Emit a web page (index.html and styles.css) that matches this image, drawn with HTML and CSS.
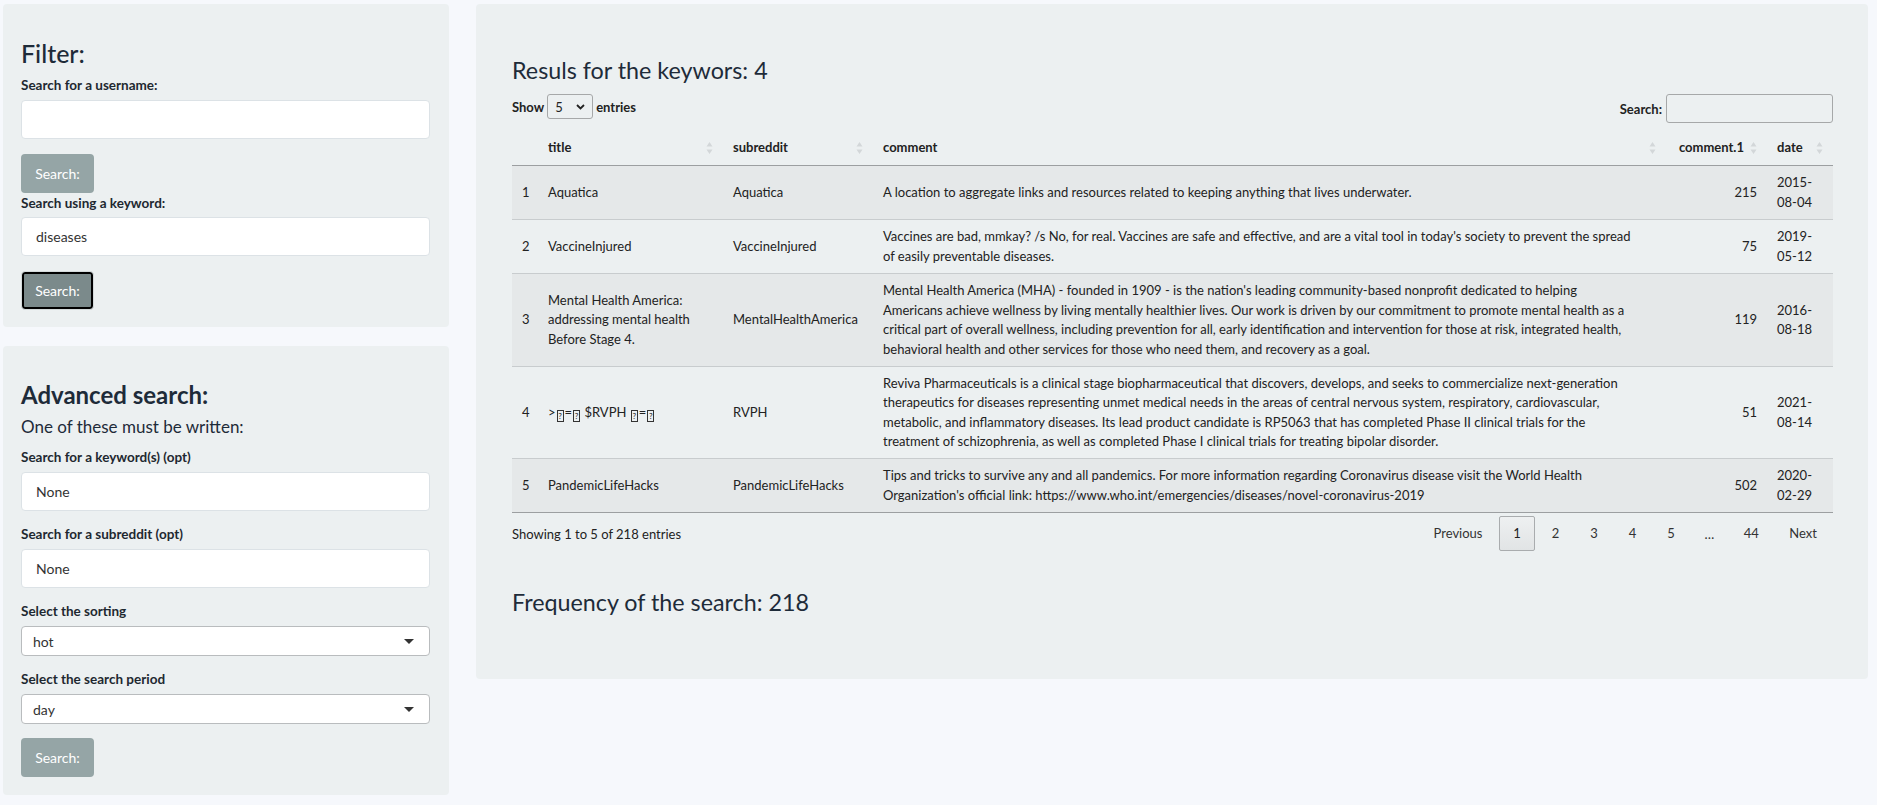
FILE: index.html
```html
<!DOCTYPE html>
<html>
<head>
<meta charset="utf-8">
<title>Search</title>
<link rel="stylesheet" href="styles.css">
</head>
<body>
<div class="page">
  <aside class="sidebar">
    <section class="well well-filter">
      <h3 class="h-filter">Filter:</h3>
      <label class="lbl">Search for a username:</label>
      <div class="input"></div>
      <button class="btn">Search:</button>
      <label class="lbl lbl-tight">Search using a keyword:</label>
      <div class="input">diseases</div>
      <button class="btn btn-focus">Search:</button>
    </section>
    <section class="well well-adv">
      <h3 class="h-adv">Advanced search:</h3>
      <p class="lead">One of these must be written:</p>
      <div class="group">
        <label class="lbl">Search for a keyword(s) (opt)</label>
        <div class="input">None</div>
      </div>
      <div class="group">
        <label class="lbl">Search for a subreddit (opt)</label>
        <div class="input">None</div>
      </div>
      <div class="group">
        <label class="lbl">Select the sorting</label>
        <div class="select"><span>hot</span><span class="caret"></span></div>
      </div>
      <div class="group group-last">
        <label class="lbl">Select the search period</label>
        <div class="select"><span>day</span><span class="caret"></span></div>
      </div>
      <button class="btn">Search:</button>
    </section>
  </aside>

  <main class="well main">
    <h4 class="title">Resuls for the keywors: 4</h4>
    <div class="controls">
      <div class="length">
        <span class="ctl-label">Show</span>
        <span class="len-select"><span>5</span>
          <svg class="chev" width="9" height="6" viewBox="0 0 9 6"><path d="M1 1 L4.5 4.5 L8 1" fill="none" stroke="#222" stroke-width="1.8"/></svg>
        </span>
        <span class="ctl-label">entries</span>
      </div>
      <div class="filter">
        <span class="ctl-label">Search:</span>
        <span class="search-box"></span>
      </div>
    </div>

    <table class="dt">
      <colgroup>
        <col class="c-num"><col class="c-title"><col class="c-sub"><col class="c-com"><col class="c-com1"><col class="c-date">
      </colgroup>
      <thead>
        <tr>
          <th></th>
          <th><div class="th-in"><span>title</span><svg class="sort" width="7" height="14" viewBox="0 0 7 14"><path d="M3.5 1 L6.5 5.5 H0.5 Z M3.5 13 L6.5 8.5 H0.5 Z" fill="#d3d7d9"/></svg></div></th>
          <th><div class="th-in"><span>subreddit</span><svg class="sort" width="7" height="14" viewBox="0 0 7 14"><path d="M3.5 1 L6.5 5.5 H0.5 Z M3.5 13 L6.5 8.5 H0.5 Z" fill="#d3d7d9"/></svg></div></th>
          <th><div class="th-in"><span>comment</span><svg class="sort" width="7" height="14" viewBox="0 0 7 14"><path d="M3.5 1 L6.5 5.5 H0.5 Z M3.5 13 L6.5 8.5 H0.5 Z" fill="#d3d7d9"/></svg></div></th>
          <th><div class="th-in th-right"><span>comment.1</span><svg class="sort" width="7" height="14" viewBox="0 0 7 14"><path d="M3.5 1 L6.5 5.5 H0.5 Z M3.5 13 L6.5 8.5 H0.5 Z" fill="#d3d7d9"/></svg></div></th>
          <th><div class="th-in"><span>date</span><svg class="sort" width="7" height="14" viewBox="0 0 7 14"><path d="M3.5 1 L6.5 5.5 H0.5 Z M3.5 13 L6.5 8.5 H0.5 Z" fill="#d3d7d9"/></svg></div></th>
        </tr>
      </thead>
      <tbody>
        <tr class="odd">
          <td>1</td><td>Aquatica</td><td>Aquatica</td>
          <td>A location to aggregate links and resources related to keeping anything that lives underwater.</td>
          <td class="num">215</td><td>2015-08-04</td>
        </tr>
        <tr>
          <td>2</td><td>VaccineInjured</td><td>VaccineInjured</td>
          <td>Vaccines are bad, mmkay? /s No, for real. Vaccines are safe and effective, and are a vital tool in today's society to prevent the spread<br>of easily preventable diseases.</td>
          <td class="num">75</td><td>2019-05-12</td>
        </tr>
        <tr class="odd">
          <td>3</td><td>Mental Health America: addressing mental health Before Stage 4.</td><td>MentalHealthAmerica</td>
          <td>Mental Health America (MHA) - founded in 1909 - is the nation's leading community-based nonprofit dedicated to helping<br>Americans achieve wellness by living mentally healthier lives. Our work is driven by our commitment to promote mental health as a<br>critical part of overall wellness, including prevention for all, early identification and intervention for those at risk, integrated health,<br>behavioral health and other services for those who need them, and recovery as a goal.</td>
          <td class="num">119</td><td>2016-08-18</td>
        </tr>
        <tr class="r4">
          <td>4</td><td>&gt;<span class="tofu">?</span>=<span class="tofu">?</span> $RVPH <span class="tofu">?</span>=<span class="tofu">?</span></td><td>RVPH</td>
          <td>Reviva Pharmaceuticals is a clinical stage biopharmaceutical that discovers, develops, and seeks to commercialize next-generation<br>therapeutics for diseases representing unmet medical needs in the areas of central nervous system, respiratory, cardiovascular,<br>metabolic, and inflammatory diseases. Its lead product candidate is RP5063 that has completed Phase II clinical trials for the<br>treatment of schizophrenia, as well as completed Phase I clinical trials for treating bipolar disorder.</td>
          <td class="num">51</td><td>2021-08-14</td>
        </tr>
        <tr class="odd last">
          <td>5</td><td>PandemicLifeHacks</td><td>PandemicLifeHacks</td>
          <td>Tips and tricks to survive any and all pandemics. For more information regarding Coronavirus disease visit the World Health<br>Organization's official link: https://www.who.int/emergencies/diseases/novel-coronavirus-2019</td>
          <td class="num">502</td><td>2020-02-29</td>
        </tr>
      </tbody>
    </table>

    <div class="footer">
      <div class="info">Showing 1 to 5 of 218 entries</div>
      <div class="pager">
        <span class="pg">Previous</span>
        <span class="pg current">1</span>
        <span class="pg">2</span>
        <span class="pg">3</span>
        <span class="pg">4</span>
        <span class="pg">5</span>
        <span class="ellipsis">…</span>
        <span class="pg">44</span>
        <span class="pg">Next</span>
      </div>
    </div>

    <h4 class="title freq">Frequency of the search: 218</h4>
  </main>
</div>
</body>
</html>
```

FILE: styles.css
```css
* { box-sizing: border-box; }

body {
  margin: 0;
  background: #f6f8fc;
  font-family: "Lato", "Liberation Sans", sans-serif;
  color: #222;
}

.page {
  display: flex;
  align-items: flex-start;
  gap: 27px;
  padding: 4px 9px 0 3px;
}

.sidebar {
  width: 446px;
  flex: none;
  display: flex;
  flex-direction: column;
  gap: 19px;
}

.well {
  background: #ecf0f1;
  border-radius: 4px;
}

.well-filter { padding: 34px 19px 17px 18px; }
.well-adv { padding: 34px 19px 18px 18px; }

.h-filter, .h-adv {
  margin: 0 0 7px;
  font-size: 25px;
  line-height: 30px;
  color: #1e2b39;
}
.h-filter { font-weight: 500; }
.h-adv { font-weight: 700; font-size: 24px; margin-bottom: 5px; }

.lead {
  margin: 0 0 9px;
  font-size: 17px;
  line-height: 23px;
  color: #1e2b39;
}

.lbl {
  display: block;
  font-size: 13.5px;
  line-height: 20px;
  font-weight: 700;
  margin: 0 0 5px;
  color: #1e2830;
}
.lbl-tight { margin-bottom: 4px; }

.input {
  height: 39px;
  background: #fff;
  border: 1px solid #dce2e6;
  border-radius: 4px;
  padding: 0 14px;
  font-size: 14px;
  line-height: 37px;
  color: #333;
}
.well-filter .input { margin-bottom: 15px; }

.group { margin-bottom: 13px; }
.group-last { margin-bottom: 14px; }

.select {
  height: 30px;
  background: #fff;
  border: 1px solid #b9bcbe;
  border-radius: 4px;
  padding: 0 15px 0 11px;
  display: flex;
  align-items: center;
  justify-content: space-between;
  font-size: 14px;
  color: #333;
}
.caret {
  width: 0;
  height: 0;
  border-left: 5px solid transparent;
  border-right: 5px solid transparent;
  border-top: 5px solid #333;
}

.btn {
  display: block;
  width: 73px;
  height: 39px;
  border: none;
  border-radius: 4px;
  background: #95a5a6;
  color: #fff;
  font-family: "Lato", "Liberation Sans", sans-serif;
  font-size: 14px;
  padding: 0;
}
.btn-focus {
  background: #7b8a8b;
  border: 1px solid #d5dadb;
  box-shadow: inset 0 0 0 2px #000;
}

/* main panel */
.main {
  flex: none;
  width: 1392px;
  padding: 52px 35px 62px 36px;
}

.title {
  margin: 0;
  font-size: 23.3px;
  line-height: 29px;
  font-weight: 400;
  color: #1e2b39;
}

.controls {
  margin-top: 9px;
  display: flex;
  justify-content: space-between;
  align-items: flex-start;
  font-size: 13px;
}
.length, .filter {
  display: flex;
  align-items: center;
  gap: 3px;
}
.length { height: 25px; }
.filter { height: 29px; gap: 4px; }
.ctl-label { font-weight: 700; color: #222; }

.len-select {
  width: 46px;
  height: 25px;
  border: 1px solid #a6a8a9;
  border-radius: 3px;
  display: flex;
  align-items: center;
  justify-content: space-between;
  padding: 0 7px 0 7px;
  font-size: 13px;
}
.search-box {
  width: 167px;
  height: 29px;
  border: 1px solid #a6a8a9;
  border-radius: 3px;
}

.dt {
  margin-top: 7px;
  width: 100%;
  table-layout: fixed;
  border-collapse: collapse;
  font-size: 13px;
}
.c-num { width: 26px; }
.c-title { width: 185px; }
.c-sub { width: 150px; }
.c-com { width: 793px; }
.c-com1 { width: 101px; }
.c-date { width: 66px; }

.dt th {
  text-align: left;
  font-weight: 700;
  padding: 8px 10px 8px 10px;
  line-height: 19px;
  border-bottom: 1px solid #9c9fa1;
  color: #222;
}
.th-in {
  display: flex;
  align-items: center;
  justify-content: space-between;
}
.th-right { justify-content: flex-end; gap: 6px; }

.dt td {
  padding: 7px 10px;
  line-height: 19.5px;
  vertical-align: middle;
  color: #222;
}
.dt tr.r4 td { padding-top: 6.5px; padding-bottom: 6.5px; }
.dt tbody tr { border-bottom: 1px solid #c8ccce; }
.dt tbody tr.last { border-bottom: 1px solid #9c9fa1; }
.dt tbody tr.odd { background: #e5e8e9; }
.dt td.num { text-align: right; }

.tofu {
  display: inline-block;
  width: 7px;
  height: 12px;
  border: 1px solid #333;
  font-size: 8px;
  line-height: 10px;
  text-align: center;
  vertical-align: -2px;
  margin: 0 1px;
}

.footer {
  margin-top: 3px;
  height: 35px;
  display: flex;
  align-items: center;
  justify-content: space-between;
  font-size: 13px;
}
.pager {
  display: flex;
  align-items: center;
  margin-right: 2px;
}
.pg {
  padding: 7px 13px;
  line-height: 19px;
  border: 1px solid transparent;
  border-radius: 2px;
  margin-left: 2.5px;
  color: #333;
  text-align: center;
  min-width: 36px;
}
.pg.current {
  background: linear-gradient(#eef0f1, #e1e4e5);
  border-color: #a9acae;
  color: #222;
}
.ellipsis {
  padding: 0 13px;
  margin-left: 2.5px;
  color: #333;
}

.freq { margin-top: 37px; }
```
